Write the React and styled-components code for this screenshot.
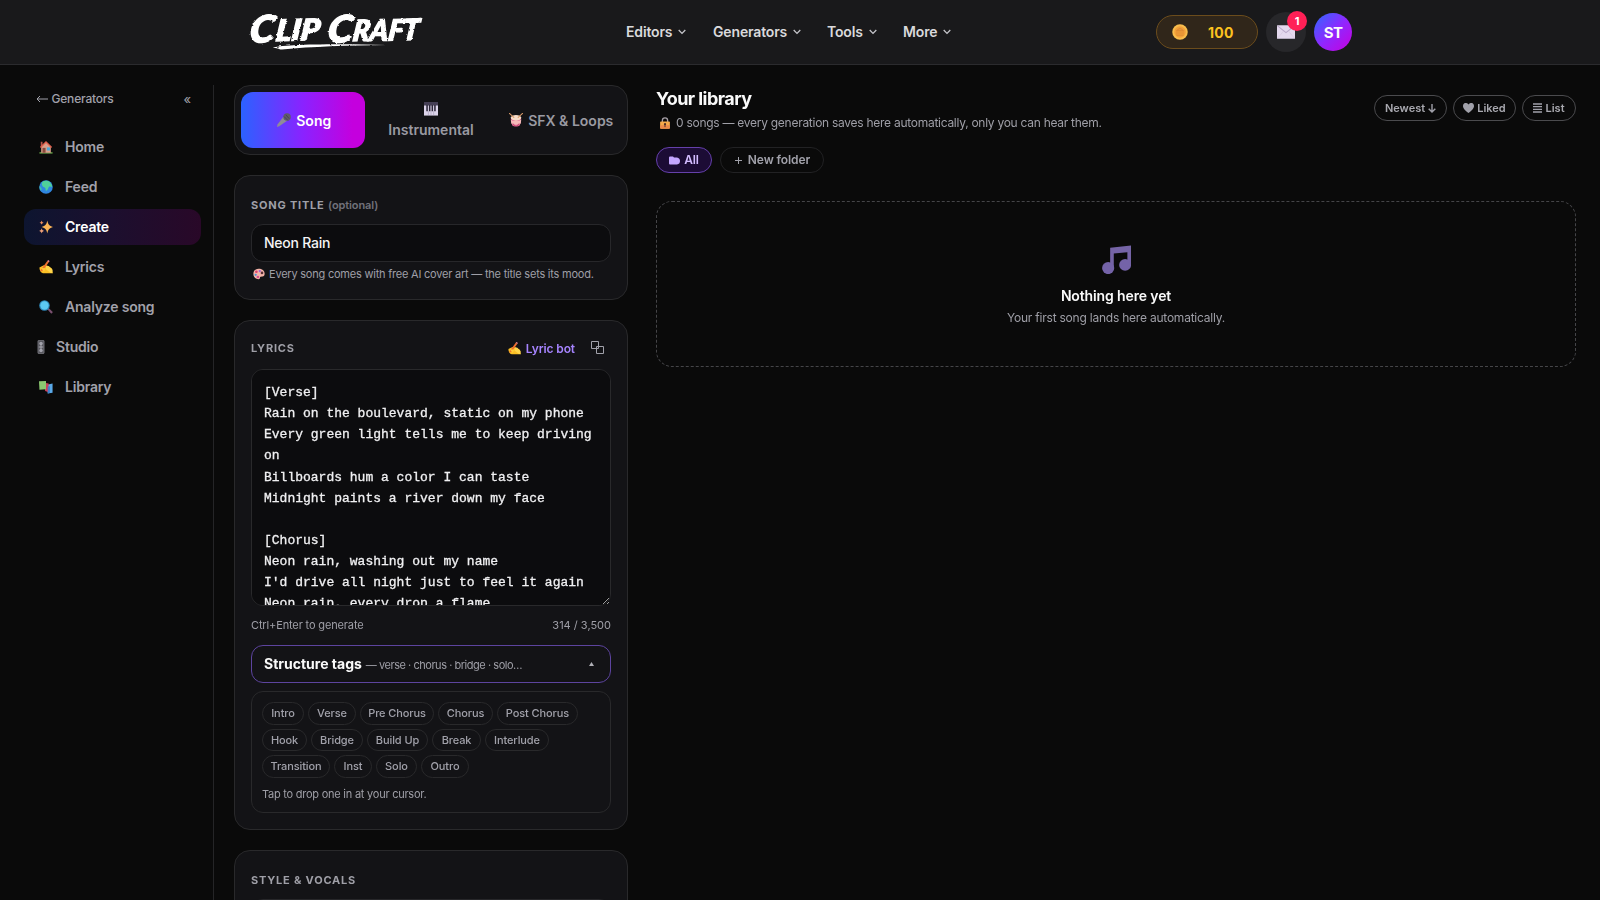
import React from 'react';
import styled, { createGlobalStyle } from 'styled-components';

const GlobalStyle = createGlobalStyle`
    * {
        box-sizing: border-box;
    }
    html, body {
        margin: 0;
        background: #0a0a0a;
        overflow: hidden;
    }
    body, button, input {
        font-family: Inter, "Liberation Sans", sans-serif;
    }
    button {
        margin: 0;
        padding: 0;
        border: 0;
        background: none;
        color: inherit;
    }
    svg {
        display: block;
        flex: none;
    }
`;

const NAV = [
    { label: 'Editors', width: 87 },
    { label: 'Generators', width: 114 },
    { label: 'Tools', width: 76 },
    { label: 'More', width: 60 },
];

const MENU = [
    { label: 'Home', icon: 'home' },
    { label: 'Feed', icon: 'globe' },
    { label: 'Create', icon: 'sparkles', active: true },
    { label: 'Lyrics', icon: 'writing' },
    { label: 'Analyze song', icon: 'search' },
    { label: 'Studio', icon: 'knobs', narrow: true },
    { label: 'Library', icon: 'books' },
];

const TAGS = [
    [['Intro', 42], ['Verse', 48], ['Pre Chorus', 74], ['Chorus', 55], ['Post Chorus', 81]],
    [['Hook', 45], ['Bridge', 52], ['Build Up', 61], ['Break', 49], ['Interlude', 64]],
    [['Transition', 68], ['Inst', 38], ['Solo', 41], ['Outro', 48]],
];

const LYRICS = `[Verse]
Rain on the boulevard, static on my phone
Every green light tells me to keep driving on
Billboards hum a color I can taste
Midnight paints a river down my face

[Chorus]
Neon rain, washing out my name
I'd drive all night just to feel it again
Neon rain, every drop a flame
Burning slow in the windowpane`;

const DRAWINGS = {
    home: (
        <>
            <rect x="1" y="28" width="30" height="3" fill="#6fae4e" />
            <path d="M5 15L16 5l11 10v14H5z" fill="#d9a08c" />
            <path d="M4 4h4v8l-4 4z" fill="#b5544a" />
            <path d="M2 16L16 2l14 14-2.500 2L16 7 4.500 18z" fill="#e0604c" />
            <rect x="8" y="18" width="7" height="11" fill="#8a4a3c" />
            <rect x="18" y="17" width="7" height="7" fill="#4aa8d8" />
        </>
    ),
    globe: (
        <>
            <circle cx="16" cy="16" r="15.500" fill="#2f86e0" />
            <path d="M8 4c5-3 14-3 18 2 3 4 4 7 4 10-3 0-4-2-6-1-2 0-2 4-5 8-2 3-4 2-4-2 0-3-2-4-5-5-3-2-5-7-2-12z" fill="#4fd19a" />
            <path d="M1 14c3 1 6 5 5 8l-2 2C2 22 1 18 1 14z" fill="#3fc0a6" />
        </>
    ),
    sparkles: (
        <>
            <path d="M19 1c1.700 9 4.500 12 13 15-8.500 3-11.300 6-13 15-1.700-9-4.500-12-13-15 8.500-3 11.300-6 13-15z" fill="#fbb556" />
            <path d="M6 1c.7 3 2 4.300 5 5-3 .7-4.300 2-5 5-.7-3-2-4.300-5-5 3-.7 4.300-2 5-5z" fill="#ef8f5a" />
            <path d="M6 19c.8 3.600 2.200 5 6 6-3.800 1-5.200 2.400-6 6-.8-3.600-2.200-5-6-6 3.800-1 5.200-2.400 6-6z" fill="#f0a078" />
        </>
    ),
    writing: (
        <>
            <path d="M1 17l10-5 10 3 8 4 2 11H9C4 29 1 24 1 17z" fill="#fbbf24" />
            <path d="M16 12l7 2 8 8v8l-5-1-10-8z" fill="#ffd54a" />
            <path d="M3 24L19 2l4 2-14 20-5 2z" fill="#f0702e" />
            <path d="M19 2l2-2 3 2-1 3z" fill="#f58aa5" />
            <path d="M5 18l11 1-5 8z" fill="#ffcb3a" />
        </>
    ),
    search: (
        <>
            <path d="M19 21l3-3 9 9c1 2-2 5-4 3z" fill="#7a5070" />
            <circle cx="12.500" cy="12.500" r="12" fill="#2e86b8" />
            <circle cx="12.500" cy="12.500" r="9.500" fill="#5cc8f2" />
        </>
    ),
    knobs: (
        <>
            <rect x="1" y="1" width="14" height="30" rx="1.500" fill="#55555c" stroke="#8c8c94" strokeWidth="1.500" />
            <circle cx="8" cy="8" r="4" fill="#a1a1aa" />
            <circle cx="8" cy="24" r="4" fill="#a1a1aa" />
            <path d="M3 16h10M8 10v12" stroke="#b4b4bc" strokeWidth="2" />
        </>
    ),
    books: (
        <>
            <path d="M18 11l13-3v21l-11 2z" fill="#5aa9e8" />
            <path d="M12 6l10 2v20l-8-3z" fill="#c9405c" />
            <path d="M0 3l16-1v19L1 22z" fill="#8bc870" />
            <path d="M20 15l5-1v15l-5 2z" fill="#3f7fc8" />
        </>
    ),
    mic: (
        <>
            <path d="M15 8l9 9L5 30l-5 2 1-6z" fill="#8f8b98" />
            <circle cx="23" cy="9" r="8.500" fill="#5f5b69" />
            <path d="M16 8l9 9M20 4l8 9" stroke="#3a3644" strokeWidth="1.500" />
        </>
    ),
    piano: (
        <>
            <rect x="0" y="1" width="32" height="30" fill="#dcd4ea" />
            <rect x="0" y="0" width="32" height="8" fill="#453f55" />
            <path d="M7 7v14M13 7v14M19 7v14M25 7v14" stroke="#2b2638" strokeWidth="3.500" />
            <path d="M10 21v10M16 21v10M22 21v10" stroke="#8f86a3" strokeWidth="1" />
        </>
    ),
    drum: (
        <>
            <path d="M4 10h24l-3 18c-4 4-14 4-18 0z" fill="#e0628c" />
            <path d="M4 14c3 6 20 6 24 0l-1 10c-6 4-16 4-22 0z" fill="#f5b8b8" />
            <ellipse cx="16" cy="11" rx="12" ry="6.500" fill="#f8dcc8" />
            <path d="M1 1l10 9M31 1L21 10" stroke="#d99a68" strokeWidth="2.500" strokeLinecap="round" />
            <path d="M9 24l4 5M23 24l-4 5" stroke="#b83868" strokeWidth="2" />
        </>
    ),
    palette: (
        <>
            <path d="M15 2C6 2 1 8 1 16c0 9 7 14 14 14 4 0 3-4 4-6 2-3 12 1 12-9C31 7 24 2 15 2z" fill="#f3b3a8" />
            <circle cx="9" cy="10" r="3.500" fill="#e0416a" />
            <circle cx="18" cy="8" r="3" fill="#a060d8" />
            <circle cx="7" cy="18" r="3" fill="#4a90d8" />
            <circle cx="13" cy="24" r="3.500" fill="#d8508c" />
            <circle cx="24" cy="13" r="3.500" fill="#5a3038" />
        </>
    ),
    lock: (
        <>
            <path d="M9 14V9c0-9 14-9 14 0v5" fill="none" stroke="#a6a0a8" strokeWidth="3.500" />
            <rect x="3" y="12" width="26" height="19" rx="2" fill="#f5a94a" />
            <path d="M3 22h26v7l-2 2H5l-2-2z" fill="#e98a4a" />
            <circle cx="16" cy="19" r="3" fill="#503028" />
            <rect x="14.700" y="20" width="2.600" height="7" fill="#503028" />
        </>
    ),
    coin: (
        <>
            <circle cx="16" cy="16" r="15.500" fill="#f9bd4c" />
            <circle cx="16" cy="16" r="11.500" fill="#f2a03a" />
            <path d="M9 13l7-5 7 5zM10 14v7M14 14v7M18 14v7M22 14v7M9 22.500h14" stroke="#d98630" strokeWidth="1.500" fill="#e8953a" />
        </>
    ),
    mail: (
        <>
            <rect x="0" y="4" width="32" height="24" rx="1" fill="#e4d9ee" />
            <path d="M1 5l15 12L31 5" fill="none" stroke="#b9a8c9" strokeWidth="1.800" />
            <path d="M1 27L12 14M31 27L20 14" stroke="#d2c4de" strokeWidth="1" />
        </>
    ),
    note: (
        <>
            <path d="M9 3.500L32 1v22h-4V8.500L13 10v17H9z" fill="#7564a6" />
            <circle cx="6.800" cy="26" r="6.700" fill="#7463a8" />
            <circle cx="25.500" cy="22.500" r="6.600" fill="#7463a8" />
        </>
    ),
};

function Emoji({ name, size = 14, width }) {
    const box = name === 'knobs' ? '0 0 16 32' : '0 0 32 32';

    return (
        <svg width={width || size} height={size} viewBox={box}>
            {DRAWINGS[name]}
        </svg>
    );
}

function Logo() {
    return (
        <svg width="190" height="64" viewBox="0 0 190 64">
            <defs>
                <filter id="brush" x="-5%" y="-10%" width="110%" height="120%">
                    <feTurbulence type="fractalNoise" baseFrequency="0.3 0.45" numOctaves="2" seed="4" result="n" />
                    <feDisplacementMap in="SourceGraphic" in2="n" scale="2.500" xChannelSelector="R" yChannelSelector="G" />
                </filter>
            </defs>
            <g filter="url(#brush)" fill="#fff">
                <LogoText transform="translate(7 43) rotate(-3) skewX(-8)" fontSize="37" textLength="25" lengthAdjust="spacingAndGlyphs">C</LogoText>
                <LogoText transform="translate(33 41) rotate(-2) skewX(-8)" fontSize="29" textLength="44" lengthAdjust="spacingAndGlyphs">LIP</LogoText>
                <LogoText transform="translate(85 43) rotate(-3) skewX(-8)" fontSize="37" textLength="25" lengthAdjust="spacingAndGlyphs">C</LogoText>
                <LogoText transform="translate(110 41) rotate(-1) skewX(-8)" fontSize="29" textLength="66" lengthAdjust="spacingAndGlyphs">RAFT</LogoText>
                <path d="M31 48c5-3.500 60-4.500 114-3-40 .5-75 1.500-105 4.500-4 .2-2-1.500-9-1.500z" />
                <path d="M157 20l23-2.500-9 3.500z" />
            </g>
        </svg>
    );
}

function Chevron() {
    return (
        <svg width="8" height="6" viewBox="0 0 8 6" fill="none" stroke="#c4c4c9" strokeWidth="1.300">
            <path d="M.7 1L4 4.400 7.300 1" />
        </svg>
    );
}

function Header() {
    return (
        <Bar>
            <Brand><Logo /></Brand>
            <Nav>
                {NAV.map((item) => (
                    <NavItem key={item.label} $width={item.width}>
                        <Raised>{item.label}</Raised>
                        <Chevron />
                    </NavItem>
                ))}
            </Nav>
            <Account>
                <Coins>
                    <Emoji name="coin" size={16} />
                    <span>100</span>
                </Coins>
                <Inbox>
                    <Emoji name="mail" size={18} />
                    <Badge>1</Badge>
                </Inbox>
                <Avatar>ST</Avatar>
            </Account>
        </Bar>
    );
}

function Sidebar() {
    return (
        <Side>
            <SideTop>
                <BackLink>
                    <svg width="12" height="8" viewBox="0 0 12 8" fill="none" stroke="#a1a1aa">
                        <path d="M12 4H1M4 1L1 4l3 3" />
                    </svg>
                    <Raised>Generators</Raised>
                </BackLink>
                <Collapse>«</Collapse>
            </SideTop>
            <Menu>
                {MENU.map((item) => (
                    <MenuItem key={item.label} $active={item.active} $narrow={item.narrow}>
                        <Emoji name={item.icon} width={item.narrow ? 8 : 14} />
                        <Raised>{item.label}</Raised>
                    </MenuItem>
                ))}
            </Menu>
        </Side>
    );
}

function Creator() {
    return (
        <Column>
            <Tabs>
                <Tab $active><Emoji name="mic" />Song</Tab>
                <Tab $stacked><Emoji name="piano" />Instrumental</Tab>
                <Tab><Emoji name="drum" />SFX &amp; Loops</Tab>
            </Tabs>

            <Card $height={125}>
                <Label>SONG TITLE <Optional>(optional)</Optional></Label>
                <TitleInput defaultValue="Neon Rain" />
                <Hint>
                    <Emoji name="palette" size={12} />
                    Every song comes with free AI cover art — the title sets its mood.
                </Hint>
            </Card>

            <Card $height={510}>
                <LyricsHead>
                    <Label>LYRICS</Label>
                    <LyricBot><Emoji name="writing" size={13} />Lyric bot</LyricBot>
                    <svg width="13" height="13" viewBox="0 0 13 13" fill="none" stroke="#a1a1aa">
                        <path d="M.5.5h7v7h-7zM5.500 5.500h7v7h-7z" />
                    </svg>
                </LyricsHead>
                <LyricsArea defaultValue={LYRICS} spellCheck={false} />
                <AreaFoot>
                    <span>Ctrl+Enter to generate</span>
                    <Count>314 / 3,500</Count>
                </AreaFoot>
                <StructureToggle>
                    <strong>Structure tags</strong>
                    <span>— verse · chorus · bridge · solo…</span>
                    <svg width="5" height="4" viewBox="0 0 5 4"><path d="M2.500 0L5 4H0z" fill="#b0b0b6" /></svg>
                </StructureToggle>
                <TagPanel>
                    {TAGS.map((row, i) => (
                        <TagRow key={i}>
                            {row.map(([name, width]) => <Tag key={name} $width={width}>{name}</Tag>)}
                        </TagRow>
                    ))}
                    <TagHint>Tap to drop one in at your cursor.</TagHint>
                </TagPanel>
            </Card>

            <Card $height={200}>
                <Label>STYLE &amp; VOCALS</Label>
                <TitleInput />
            </Card>
        </Column>
    );
}

function Library() {
    return (
        <Main>
            <LibraryHead>
                <div>
                    <Title>Your library</Title>
                    <Subtitle>
                        <Emoji name="lock" size={12} />
                        0 songs — every generation saves here automatically, only you can hear them.
                    </Subtitle>
                </div>
                <Filters>
                    <Filter $width={73}>
                        Newest
                        <svg width="8" height="9" viewBox="0 0 8 9" fill="none" stroke="#a1a1aa" strokeWidth="1.400">
                            <path d="M4 0v8M.7 4.700L4 8l3.300-3.300" />
                        </svg>
                    </Filter>
                    <Filter $width={63}>
                        <svg width="11" height="10" viewBox="0 0 11 10" fill="#a1a1aa">
                            <path d="M5.500 10C1.500 7 0 5 0 3 0-.5 4-1 5.500 1.500 7-1 11-.5 11 3c0 2-1.500 4-5.500 7z" />
                        </svg>
                        Liked
                    </Filter>
                    <Filter $width={54}>
                        <svg width="9" height="10" viewBox="0 0 9 10" stroke="#a1a1aa" strokeWidth="1.300">
                            <path d="M0 1h9M0 3.700h9M0 6.300h9M0 9h9" />
                        </svg>
                        List
                    </Filter>
                </Filters>
            </LibraryHead>
            <Folders>
                <Folder $active $width={56}>
                    <svg width="11" height="9" viewBox="0 0 11 9" fill="#c4a6ff">
                        <path d="M0 1.500Q0 .5 1 .5h3l1 1h3Q11 2 11 5t-3 3.500H1Q0 8.500 0 7.500z" />
                    </svg>
                    <Raised>All</Raised>
                </Folder>
                <Folder $width={104}>
                    <svg width="7" height="7" viewBox="0 0 7 7" stroke="#a1a1aa"><path d="M3.500 0v7M0 3.500h7" /></svg>
                    <Raised>New folder</Raised>
                </Folder>
            </Folders>
            <Empty>
                <Emoji name="note" size={30} width={29} />
                <h3>Nothing here yet</h3>
                <p>Your first song lands here automatically.</p>
            </Empty>
        </Main>
    );
}

export default function App() {
    return (
        <Page>
            <GlobalStyle />
            <Header />
            <Body>
                <Sidebar />
                <Creator />
                <Library />
            </Body>
        </Page>
    );
}

const Page = styled.div`
    height: 900px;
    display: flex;
    flex-direction: column;
    overflow: hidden;
    color: #fafafa;
    background: #0a0a0a;
`;

// label sitting a pixel above the centre line of its icon
const Raised = styled.span`
    padding-bottom: 2px;
`;

const Bar = styled.header`
    height: 65px;
    flex: none;
    display: flex;
    align-items: center;
    background: #19191b;
    border-bottom: 1px solid #2b2b2e;
`;

const Brand = styled.div`
    width: 384px;
    margin-left: 242px;
`;

const LogoText = styled.text`
    font-family: Lato, "Open Sans", sans-serif;
    font-weight: 900;
    font-style: italic;
    stroke: #fff;
    stroke-width: 1.4px;
`;

const Nav = styled.nav`
    display: flex;
    width: 530px;
`;

const NavItem = styled.button`
    width: ${(props) => props.$width}px;
    display: flex;
    align-items: center;
    gap: 6px;
    color: #d9d9dc;
    font-size: 14px;
    font-weight: 600;
    letter-spacing: -0.15px;
`;

const Account = styled.div`
    display: flex;
    align-items: center;
    gap: 8px;
`;

const Coins = styled.div`
    width: 102px;
    height: 34px;
    display: flex;
    align-items: center;
    gap: 20px;
    padding-left: 15px;
    border: 1px solid #6b4c1c;
    border-radius: 17px;
    background: #30261a;
    color: #fcc21f;
    font-size: 14px;
    font-weight: 700;
    letter-spacing: 0.3px;
`;

const Inbox = styled.div`
    position: relative;
    width: 40px;
    height: 40px;
    display: grid;
    place-items: center;
    border-radius: 50%;
    background: #27272a;
`;

const Badge = styled.span`
    position: absolute;
    top: -1px;
    right: -1px;
    width: 20px;
    height: 20px;
    border-radius: 50%;
    background: #ff2056;
    color: #fff;
    font-size: 11px;
    font-weight: 700;
    line-height: 20px;
    text-align: center;
`;

const Avatar = styled.div`
    width: 38px;
    height: 38px;
    border-radius: 50%;
    background: linear-gradient(135deg, #2b6bff, #8e28ff 50%, #c800de);
    font-size: 15px;
    font-weight: 700;
    letter-spacing: -0.7px;
    line-height: 39px;
    text-align: center;
`;

const Body = styled.div`
    flex: 1;
    min-height: 0;
    display: flex;
    padding-top: 20px;
`;

const Side = styled.aside`
    width: 214px;
    flex: none;
    padding: 0 12px 0 24px;
    border-right: 1px solid #252527;
`;

const SideTop = styled.div`
    height: 28px;
    display: flex;
    align-items: center;
    justify-content: space-between;
    padding: 0 10px 0 12px;
    color: #a1a1aa;
`;

const BackLink = styled.a`
    display: flex;
    align-items: center;
    gap: 3.500px;
    font-size: 12px;
    font-weight: 500;
    letter-spacing: -0.2px;
`;

const Collapse = styled.button`
    font-size: 13px;
`;

const Menu = styled.nav`
    display: flex;
    flex-direction: column;
    gap: 4px;
    margin-top: 16px;
`;

const MenuItem = styled.a`
    height: 36px;
    display: flex;
    align-items: center;
    gap: ${(props) => (props.$narrow ? 11 : 12)}px;
    padding-left: ${(props) => (props.$narrow ? 13 : 15)}px;
    border-radius: 12px;
    background: ${(props) => (props.$active ? 'linear-gradient(90deg, #0d1530, #1c0f2e 50%, #290828)' : 'none')};
    color: ${(props) => (props.$active ? '#fff' : '#a1a1aa')};
    font-size: 14px;
    font-weight: 600;
    letter-spacing: -0.2px;
`;

const Column = styled.section`
    width: 394px;
    flex: none;
    margin-left: 20px;
    display: flex;
    flex-direction: column;
    gap: 20px;
`;

const Tabs = styled.div`
    height: 70px;
    flex: none;
    display: grid;
    grid-template-columns: 124px 118px 130px;
    gap: 7px 6px;
    padding: 6px 0 6px 6px;
    border: 1px solid #29292b;
    border-radius: 16px;
    background: #131316;
`;

const Tab = styled.button`
    display: flex;
    flex-direction: ${(props) => (props.$stacked ? 'column' : 'row')};
    align-items: center;
    justify-content: center;
    gap: 5.500px;
    padding-left: 2px;
    border-radius: 12px;
    background: ${(props) => (props.$active ? 'linear-gradient(90deg, #2b62ff, #8a22ff 50%, #c400de 90%)' : 'none')};
    color: ${(props) => (props.$active ? '#fff' : '#9a9aa2')};
    font-size: 14px;
    font-weight: 600;
    letter-spacing: 0;
`;

const Card = styled.div`
    height: ${(props) => props.$height}px;
    flex: none;
    padding: 20px 16px 0;
    border: 1px solid #29292b;
    border-radius: 16px;
    background: #131316;
`;

const Label = styled.div`
    height: 18px;
    color: #9f9fa7;
    font-size: 11px;
    font-weight: 700;
    letter-spacing: 0.8px;
    line-height: 18px;
`;

const Optional = styled.span`
    color: #71717a;
    font-weight: 600;
    letter-spacing: -0.1px;
`;

const TitleInput = styled.input`
    width: 100%;
    height: 38px;
    display: block;
    margin-top: 10px;
    padding: 0 12px 1px;
    border: 1px solid #27272a;
    border-radius: 12px;
    background: #0c0c0e;
    color: #f4f4f5;
    font-size: 14px;
    font-weight: 500;
    letter-spacing: -0.25px;
`;

const Hint = styled.div`
    display: flex;
    align-items: center;
    gap: 4px;
    margin-top: 4px;
    padding-left: 2px;
    color: #9f9fa7;
    font-size: 11px;
    letter-spacing: -0.22px;
    line-height: 16px;
    white-space: nowrap;
`;

const LyricsHead = styled.div`
    height: 28px;
    display: flex;
    align-items: center;
    margin-top: -7px;
    padding-right: 7px;
    & > :first-child {
        margin-right: auto;
    }
    & > svg {
        margin-bottom: 2px;
    }
`;

const LyricBot = styled.button`
    display: flex;
    align-items: center;
    gap: 5px;
    margin-right: 16px;
    color: #a684ff;
    font-size: 12px;
    font-weight: 600;
    letter-spacing: -0.1px;
`;

const LyricsArea = styled.textarea`
    width: 100%;
    height: 237px;
    display: block;
    margin-top: 7px;
    padding: 12px;
    border: 1px solid #29292b;
    border-radius: 12px;
    background: #0c0c0e;
    color: #f0f0f2;
    color-scheme: dark;
    font: 13px/21.125px "Liberation Mono", monospace;
    -webkit-text-stroke: 0.3px #f0f0f2;
    resize: vertical;
    scrollbar-width: none;
`;

const AreaFoot = styled.div`
    display: flex;
    justify-content: space-between;
    margin-top: 11px;
    color: #9f9fa7;
    font-size: 11px;
    letter-spacing: -0.14px;
    line-height: 16px;
`;

const Count = styled.span`
    letter-spacing: 0;
`;

const StructureToggle = styled.button`
    width: 100%;
    height: 38px;
    display: flex;
    align-items: center;
    gap: 4px;
    margin-top: 12px;
    padding: 0 16px 0 12px;
    border: 1px solid #5d449f;
    border-radius: 12px;
    strong {
        padding-bottom: 1px;
        font-size: 14px;
        font-weight: 700;
        letter-spacing: 0;
    }
    span {
        margin: 1px auto 0 0;
        color: #9f9fa7;
        font-size: 11px;
        letter-spacing: -0.46px;
    }
`;

const TagPanel = styled.div`
    height: 122px;
    display: flex;
    flex-direction: column;
    gap: 4px;
    margin-top: 8px;
    padding: 10px;
    border: 1px solid #29292b;
    border-radius: 12px;
`;

const TagRow = styled.div`
    display: flex;
    gap: 4px;
`;

const Tag = styled.button`
    width: ${(props) => props.$width}px;
    height: 22.600px;
    border: 1px solid #29292b;
    border-radius: 12px;
    color: #a1a1aa;
    font-size: 11px;
    font-weight: 500;
    letter-spacing: -0.1px;
    white-space: nowrap;
`;

const TagHint = styled.div`
    margin-top: 3px;
    color: #9f9fa7;
    font-size: 11px;
    letter-spacing: -0.24px;
    line-height: 18px;
`;

const Main = styled.main`
    flex: 1;
    margin: 0 24px 0 28px;
`;

const LibraryHead = styled.div`
    height: 46px;
    display: flex;
    justify-content: space-between;
`;

const Title = styled.h1`
    margin: 0;
    font-size: 18px;
    font-weight: 700;
    letter-spacing: -0.55px;
    line-height: 28px;
`;

const Subtitle = styled.div`
    display: flex;
    align-items: center;
    gap: 5px;
    padding-left: 3px;
    color: #9f9fa7;
    font-size: 12px;
    letter-spacing: -0.27px;
    line-height: 20px;
`;

const Filters = styled.div`
    display: flex;
    gap: 6px;
    margin-top: 10px;
`;

const Filter = styled.button`
    width: ${(props) => props.$width}px;
    height: 26px;
    display: flex;
    align-items: center;
    justify-content: center;
    gap: 3px;
    border: 1px solid #4b4b4e;
    border-radius: 13px;
    color: #a9a9b0;
    font-size: 11px;
    font-weight: 600;
`;

const Folders = styled.div`
    display: flex;
    gap: 8px;
    margin-top: 16px;
`;

const Folder = styled.button`
    width: ${(props) => props.$width}px;
    height: 26px;
    display: flex;
    align-items: center;
    justify-content: center;
    gap: ${(props) => (props.$active ? 4 : 6)}px;
    padding-left: ${(props) => (props.$active ? 0 : 1)}px;
    border: 1px solid ${(props) => (props.$active ? '#6540ab' : '#222224')};
    border-radius: 13px;
    background: ${(props) => (props.$active ? '#1c0c35' : 'none')};
    color: ${(props) => (props.$active ? '#d3bcff' : '#a1a1aa')};
    font-size: 12px;
    font-weight: 600;
    letter-spacing: -0.1px;
`;

const Empty = styled.div`
    height: 166px;
    display: flex;
    flex-direction: column;
    align-items: center;
    margin-top: 28px;
    padding-top: 42px;
    border: 1px dashed #454548;
    border-radius: 16px;
    h3 {
        margin: 12px 0 0;
        font-size: 14px;
        font-weight: 600;
        letter-spacing: -0.13px;
        line-height: 20px;
    }
    p {
        margin: 3px 0 0;
        color: #9f9fa7;
        font-size: 12px;
        letter-spacing: -0.22px;
        line-height: 18px;
    }
`;
